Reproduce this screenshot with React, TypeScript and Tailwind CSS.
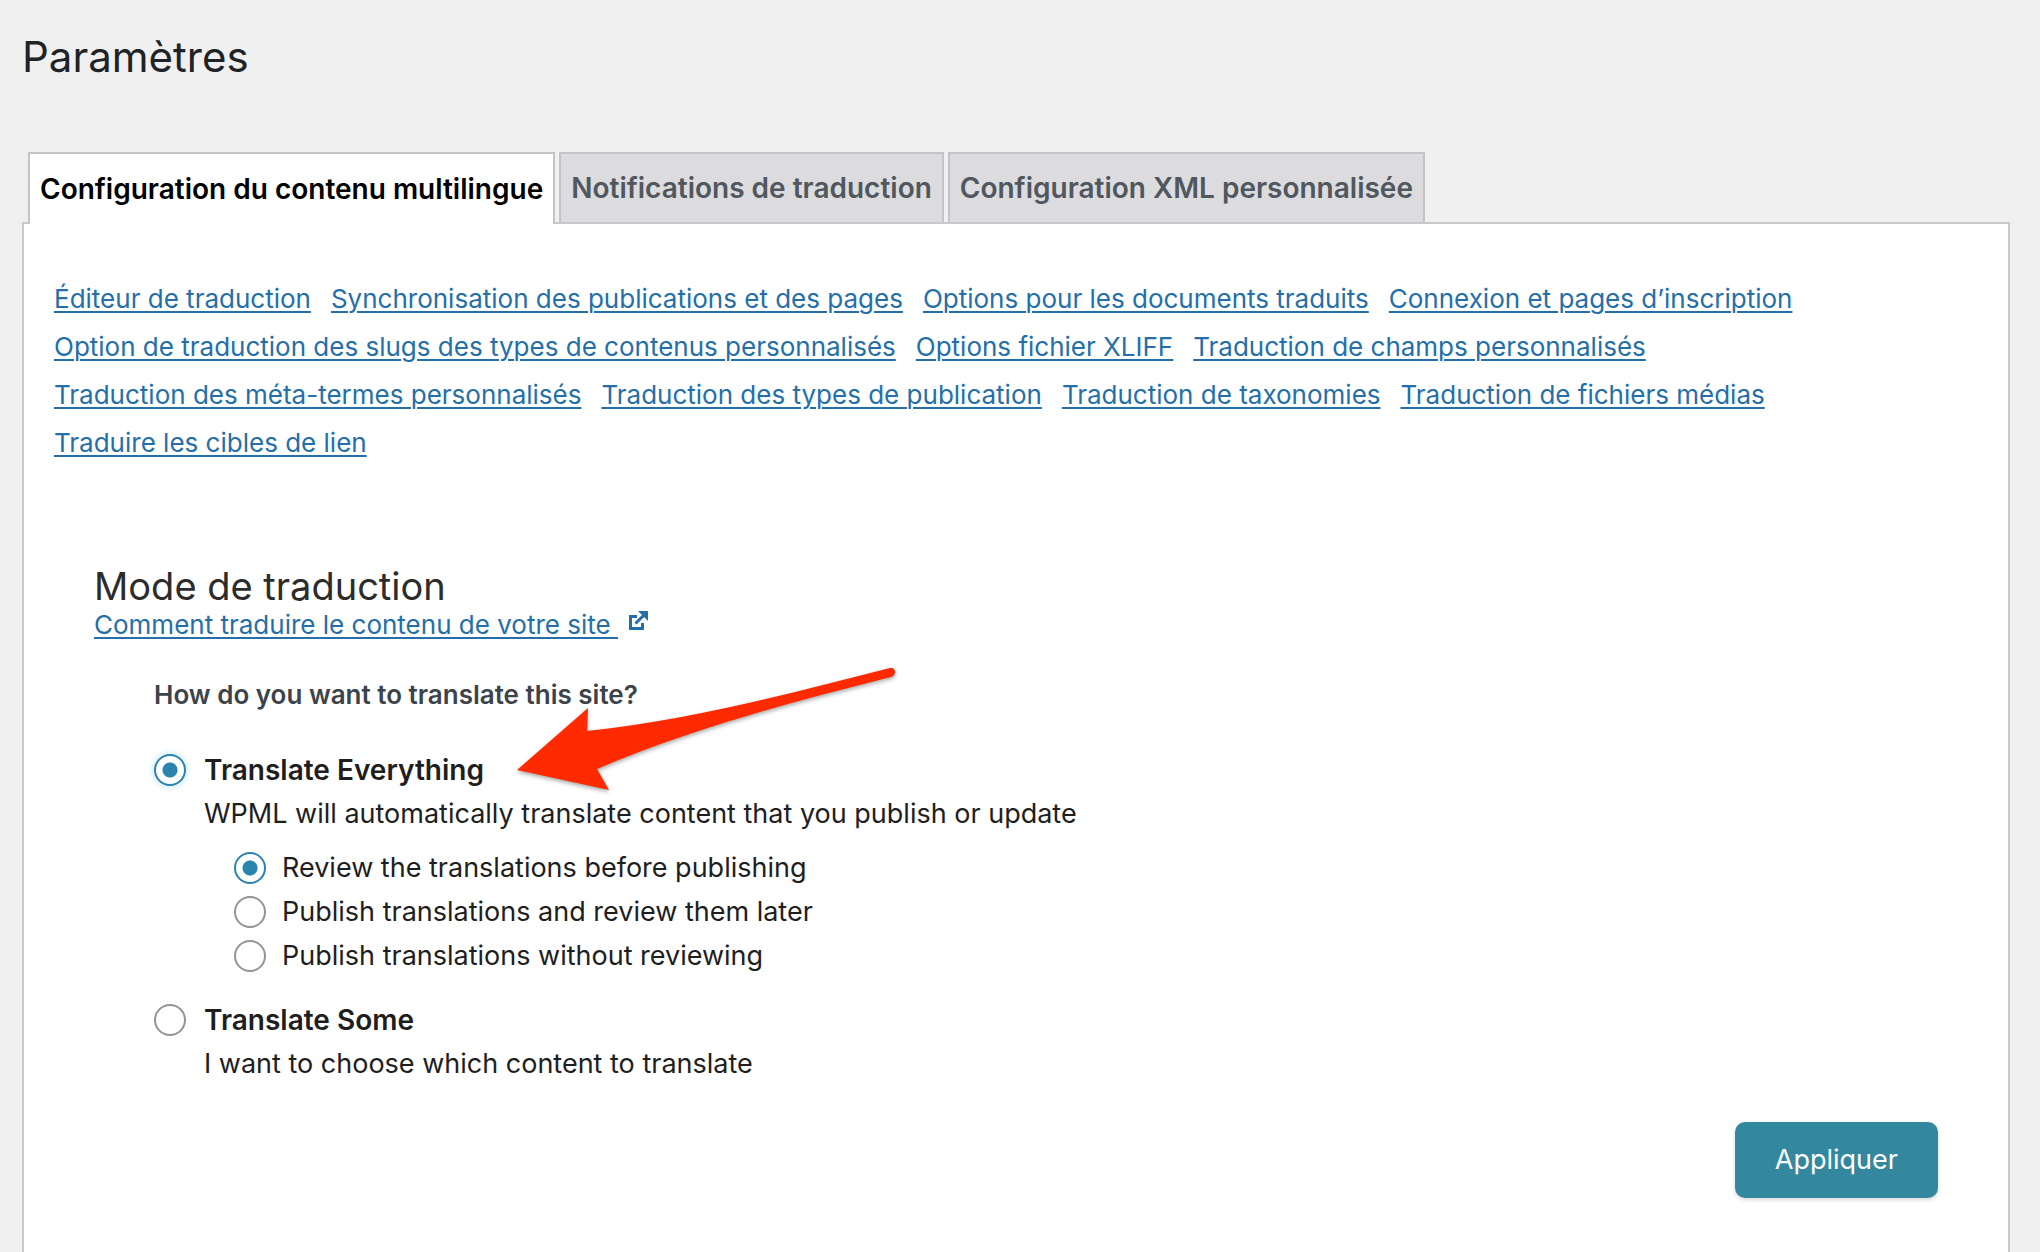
import { useId, useState } from "react";

const TABS = [
  "Configuration du contenu multilingue",
  "Notifications de traduction",
  "Configuration XML personnalisée",
];

const SECTION_LINKS = [
  "Éditeur de traduction",
  "Synchronisation des publications et des pages",
  "Options pour les documents traduits",
  "Connexion et pages d’inscription",
  "Option de traduction des slugs des types de contenus personnalisés",
  "Options fichier XLIFF",
  "Traduction de champs personnalisés",
  "Traduction des méta-termes personnalisés",
  "Traduction des types de publication",
  "Traduction de taxonomies",
  "Traduction de fichiers médias",
  "Traduire les cibles de lien",
];

const REVIEW_MODES = [
  { value: "before", label: "Review the translations before publishing" },
  { value: "after", label: "Publish translations and review them later" },
  { value: "none", label: "Publish translations without reviewing" },
];

const LINK_CLS =
  "text-[#246fa9] underline decoration-2 underline-offset-3 hover:text-[#135e96]";

interface RadioProps {
  name: string;
  value: string;
  label: string;
  checked: boolean;
  onChange: (value: string) => void;
  strong?: boolean;
}

function Radio({ name, value, label, checked, onChange, strong }: RadioProps) {
  const id = useId();

  return (
    <div className={`flex items-center ${strong ? "gap-[18px]" : "gap-4"}`}>
      <input
        id={id}
        type="radio"
        name={name}
        value={value}
        checked={checked}
        onChange={() => onChange(value)}
        className={`size-8 shrink-0 appearance-none rounded-full border-2 border-[#949494] bg-white checked:border-[#2a84ad] checked:bg-[radial-gradient(circle,#2a84ad_7px,transparent_8px)] ${
          strong ? "checked:shadow-[0_0_4px_3px_#dff2fb]" : ""
        }`}
      />
      <label htmlFor={id} className={strong ? "text-[28px] font-semibold" : ""}>
        {label}
      </label>
    </div>
  );
}

function ExternalIcon() {
  return (
    <svg viewBox="0 0 20 20" className="mb-2 size-5" fill="none" stroke="currentColor" aria-hidden="true">
      <path d="M9 5.5H2.5v12h12V12" strokeWidth="3" />
      <path d="M7.5 12.5 17 3" strokeWidth="3" />
      <path d="M10 0h10v10l-3-3-4-4z" fill="currentColor" stroke="none" />
    </svg>
  );
}

function Arrow() {
  return (
    <svg
      viewBox="0 0 380 124"
      className="pointer-events-none absolute -top-20 left-[363px] w-[380px] drop-shadow-[0_2px_2px_rgba(0,0,0,0.35)]"
      aria-hidden="true"
    >
      <path
        d="M0 102 71 40 70 63C175 52 275 25 373 0 379 -1 380 7 374 9 275 34 177 60 80 101L92 122Z"
        fill="#ff2a00"
      />
    </svg>
  );
}

export default function App() {
  const [tab, setTab] = useState(TABS[0]);
  const [mode, setMode] = useState("everything");
  const [review, setReview] = useState("before");

  return (
    <div className="flex min-h-screen flex-col bg-[#f0f0f1] pt-[26px] pr-[30px] pl-[22px] font-['Inter','Liberation_Sans',sans-serif] text-[#1d2327]">
      <h1 className="text-[42px] leading-[62px]">Paramètres</h1>

      <div role="tablist" className="mt-16 flex gap-1 pl-[6px]">
        {TABS.map((name) => (
          <button
            key={name}
            type="button"
            role="tab"
            aria-selected={tab === name}
            onClick={() => setTab(name)}
            className={`border-2 border-b-0 border-[#c3c4c7] px-[10px] py-4 text-[28px] leading-9 font-semibold ${
              tab === name ? "z-10 -mb-[2px] bg-white text-black" : "bg-[#dcdcde] text-[#50575e]"
            }`}
          >
            {name}
          </button>
        ))}
      </div>

      <main className="flex-1 border-2 border-b-0 border-[#c8c9cb] bg-white px-[30px] pt-[51px]">
        <nav className="flex flex-wrap gap-x-5 text-[26px] leading-[48px]">
          {SECTION_LINKS.map((text) => (
            <a key={text} href="#" className={LINK_CLS}>
              {text}
            </a>
          ))}
        </nav>

        <section className="mt-24 px-10">
          <h2 className="text-[38px] leading-[46px] text-[#2c2c2c]">Mode de traduction</h2>
          <a href="#" className="inline-flex items-center gap-[10px] text-[26px] leading-8 text-[#246fa9]">
            <span className={`whitespace-pre ${LINK_CLS}`}>{"Comment traduire le contenu de votre site "}</span>
            <ExternalIcon />
          </a>

          <form className="mt-8 text-[27px] leading-[44px] text-[#1e1e1e]" onSubmit={(e) => e.preventDefault()}>
            <div className="pl-[60px]">
              <p className="text-[26px] font-semibold text-[#3c434a]">How do you want to translate this site?</p>

              <div className="relative mt-[31px]">
                <Radio
                  name="mode"
                  value="everything"
                  label="Translate Everything"
                  checked={mode === "everything"}
                  onChange={setMode}
                  strong
                />
                <Arrow />
              </div>
              <p className="pl-[50px]">WPML will automatically translate content that you publish or update</p>
              <div className="mt-[10px] pl-20">
                {REVIEW_MODES.map((item) => (
                  <Radio
                    key={item.value}
                    name="review"
                    value={item.value}
                    label={item.label}
                    checked={review === item.value}
                    onChange={setReview}
                  />
                ))}
              </div>

              <div className="mt-5">
                <Radio
                  name="mode"
                  value="some"
                  label="Translate Some"
                  checked={mode === "some"}
                  onChange={setMode}
                  strong
                />
              </div>
              <p className="pl-[50px]">I want to choose which content to translate</p>
            </div>

            <div className="mt-9 flex justify-end">
              <button
                type="submit"
                className="rounded-[10px] bg-[#33879e] px-10 py-4 text-white shadow-[0_2px_4px_rgba(0,0,0,0.15)]"
              >
                Appliquer
              </button>
            </div>
          </form>
        </section>
      </main>
    </div>
  );
}
